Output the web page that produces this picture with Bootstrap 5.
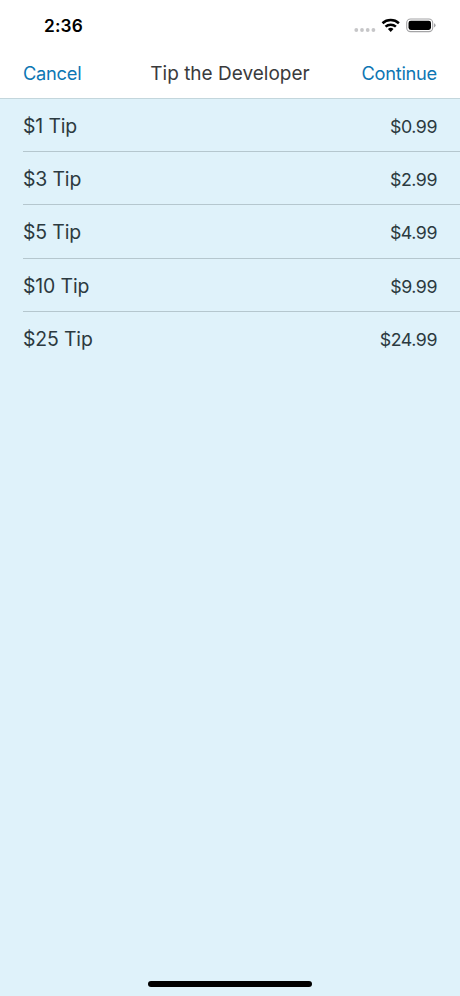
<!DOCTYPE html>
<html lang="en">
<head>
<meta charset="utf-8">
<meta name="viewport" content="width=device-width, initial-scale=1">
<title>Tip the Developer</title>
<link href="https://cdn.jsdelivr.net/npm/bootstrap@5.3.0/dist/css/bootstrap.min.css" rel="stylesheet">
<style>
  body { font-family: Inter, "Liberation Sans", sans-serif; background: #dff2fa; color: #2c3a40; height: 996px; overflow: hidden; }
  .status-bar { height: 50px; padding: 2px 24px 0 44px; color: #000; }
  .clock { font-size: 17.3px; font-weight: 600; line-height: 1; letter-spacing: .12px; }
  .top-nav { height: 49px; padding: 0 23px 1px; border-bottom: 1px solid #c3d6dc; font-size: 18.3px; line-height: 24px; }
  .nav-action { flex: 1 1 0; padding-bottom: 2px; color: #0d76b3; text-decoration: none; letter-spacing: -.27px; }
  .nav-title { font-size: 19px; color: #3a3a3c; }
  .tip-list { --bs-list-group-bg: transparent; --bs-list-group-color: #2c3a40; padding-left: 22.5px; }
  .tip-row { height: 53.2px; padding: 2px 23px 0 .5px; border-color: #b5c7ce; font-size: 19.4px; line-height: 24px; letter-spacing: -.13px; }
  .tip-price { font-size: 17.8px; padding-top: 2px; letter-spacing: -.45px; }
  .home-bar { width: 164px; height: 6px; margin-bottom: 9px; background: #000; }
</style>
</head>
<body class="d-flex flex-column">
  <header class="bg-white">
    <div class="status-bar d-flex align-items-center justify-content-between">
      <span class="clock">2:36</span>
      <svg width="84" height="20" viewBox="0 0 84 20" aria-hidden="true">
        <g fill="#c6c6c8"><circle cx="4.3" cy="14" r="1.9"/><circle cx="10" cy="14" r="1.9"/><circle cx="15.7" cy="14" r="1.9"/><circle cx="21.4" cy="14" r="1.9"/></g>
        <g fill="none" stroke="#000" stroke-width="2.5">
          <path d="M30.5 7.2a12.2 12.2 0 0 1 16.4 0"/>
          <path d="M33.5 10.7a7.6 7.6 0 0 1 10.4 0"/>
        </g>
        <path d="M35.9 13.1a4.2 4.2 0 0 1 5.6 0l-2.8 2.9z"/>
        <rect x="54.7" y="3" width="26" height="12.6" rx="3.8" fill="#fff" stroke="#a4a4a6" stroke-width="1.1"/>
        <rect x="56.5" y="4.7" width="22.5" height="9.2" rx="2.3"/>
        <path d="M82 7.2v4.3q1.6-.6 1.6-2.15T82 7.2z" fill="#a4a4a6"/>
      </svg>
    </div>
    <nav class="top-nav d-flex align-items-center justify-content-between">
      <a class="nav-action" href="#">Cancel</a>
      <span class="nav-title">Tip the Developer</span>
      <a class="nav-action text-end" href="#">Continue</a>
    </nav>
  </header>
  <main class="flex-grow-1">
    <ul class="tip-list list-group list-group-flush">
      <li class="tip-row list-group-item d-flex align-items-center justify-content-between"><span>$1 Tip</span><span class="tip-price">$0.99</span></li>
      <li class="tip-row list-group-item d-flex align-items-center justify-content-between"><span>$3 Tip</span><span class="tip-price">$2.99</span></li>
      <li class="tip-row list-group-item d-flex align-items-center justify-content-between"><span>$5 Tip</span><span class="tip-price">$4.99</span></li>
      <li class="tip-row list-group-item d-flex align-items-center justify-content-between"><span>$10 Tip</span><span class="tip-price">$9.99</span></li>
      <li class="tip-row list-group-item d-flex align-items-center justify-content-between"><span>$25 Tip</span><span class="tip-price">$24.99</span></li>
    </ul>
  </main>
  <div class="home-bar rounded-pill mx-auto"></div>
  <script src="https://cdn.jsdelivr.net/npm/bootstrap@5.3.0/dist/js/bootstrap.bundle.min.js"></script>
</body>
</html>
